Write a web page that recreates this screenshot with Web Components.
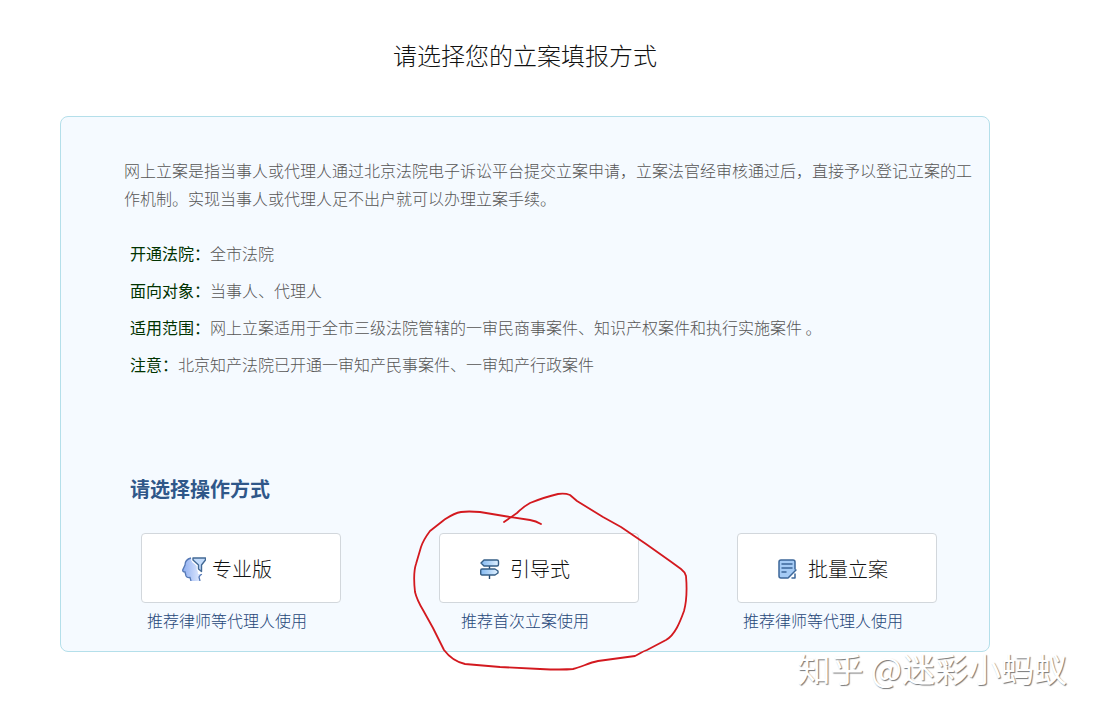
<!DOCTYPE html>
<html lang="zh-CN">
<head>
<meta charset="utf-8" />
<meta name="viewport" content="width=device-width, initial-scale=1" />
<title>请选择您的立案填报方式</title>
<style>
body {
	background: #fff;
	color: #555;
	font: 300 16px/28px "Noto Sans CJK SC", sans-serif;
	margin: 0;
}
</style>
</head>

<body>
<template id="filing-page">
<style>
:host {
	display: block;
	padding: 35px 105px 64px 60px;
	position: relative;
}

h1 {
	color: #111;
	font-size: 24px;
	font-weight: 300;
	line-height: 40px;
	margin: 0 0 41px;
	text-align: center;
}
</style>
<h1><slot name="title"></slot></h1>
<slot></slot>
</template>

<template id="filing-panel">
<style>
:host {
	background: #f5faff;
	border: 1px solid #b4dfea;
	border-radius: 8px;
	display: block;
	padding: 39px 16px 17px 63px;
}

p {
	margin: 0 0 23px;
}

dl {
	margin: 0 0 92px;
	padding-left: 6px;
}

h2 {
	color: #2f5789;
	font-size: 20px;
	font-weight: 700;
	line-height: 28px;
	margin: 0 0 30px;
	padding-left: 6px;
}

.options {
	display: flex;
	flex-wrap: wrap;
	gap: 20px;
	justify-content: space-between;
	padding: 0 36px 0 17px;
}
</style>
<p><slot name="intro"></slot></p>
<dl><slot name="facts"></slot></dl>
<h2><slot name="heading"></slot></h2>
<div class="options"><slot></slot></div>
</template>

<template id="filing-fact">
<style>
:host {
	display: block;
	line-height: 37px;
}

div {
	display: flex;
}

dt {
	color: #003300;
	flex: none;
	font-weight: 400;
}

dd {
	margin: 0;
}
</style>
<div>
	<dt></dt>
	<dd><slot></slot></dd>
</div>
</template>

<template id="filing-option">
<style>
:host {
	display: block;
	position: relative;
	width: 200px;
}

button {
	align-items: center;
	background: #fff;
	border: 1px solid #d2d7dc;
	border-radius: 4px;
	box-sizing: border-box;
	color: #111;
	cursor: pointer;
	display: flex;
	font: inherit;
	font-size: 20px;
	gap: 6px;
	height: 70px;
	padding: 2px 0 0 40px;
	width: 100%;
}

svg {
	flex: none;
	height: 24px;
	width: 24px;
}

small {
	color: #1f4678;
	display: block;
	font-family: KaiTi, "Noto Sans CJK SC", sans-serif;
	font-size: 16px;
	margin-top: 3px;
	padding-right: 28px;
	text-align: center;
}
</style>
<button type="button" aria-describedby="hint">
	<svg viewBox="0 0 24 24" aria-hidden="true"></svg>
	<span><slot></slot></span>
</button>
<small id="hint"><slot name="hint"></slot></small>
<slot name="mark"></slot>
</template>

<template id="hand-circle">
<style>
:host {
	left: -39px;
	pointer-events: none;
	position: absolute;
	top: -53px;
	z-index: 1;
}

svg {
	display: block;
	height: 200px;
	width: 300px;
}
</style>
<svg viewBox="0 0 300 200" fill="none" stroke="#d3191f" stroke-width="1.8" stroke-linecap="round" stroke-linejoin="round" aria-hidden="true">
	<path d="M141 44Q136 41 130 40L107 36.500L80 32Q68 31 61 32C54 33 50 36 44 40L30 51C27 55 23 61 21 67L16 84C13 93 14 103 15 112C17 120 20 125 23 130L33 148L44 170C50 178 56 182 65 184L100 187L140 189Q162 190 173 189C182 187 188 183 198 181L235 176C240 174 241 172 247 170L266 160C275 155 280 142 284 131C287 120 287 108 286 96Q285 92 281 89L270 81L246 64L221 47L203 37L177 21L170 15Q165 13 158 14Q145 17 130 23Q123 27 117 33L104 42" />
</svg>
</template>

<template id="water-mark">
<style>
:host {
	bottom: 24px;
	color: #fff;
	font-size: 33px;
	font-weight: 400;
	line-height: 48px;
	pointer-events: none;
	position: absolute;
	right: 28px;
	text-shadow: 1px 1px 1px #777;
	white-space: nowrap;
}
</style>
<slot></slot>
</template>

<filing-page>
	<span slot="title">请选择您的立案填报方式</span>
	<filing-panel>
		<span slot="intro">网上立案是指当事人或代理人通过北京法院电子诉讼平台提交立案申请，立案法官经审核通过后，直接予以登记立案的工作机制。实现当事人或代理人足不出户就可以办理立案手续。</span>
		<filing-fact slot="facts" label="开通法院：">全市法院</filing-fact>
		<filing-fact slot="facts" label="面向对象：">当事人、代理人</filing-fact>
		<filing-fact slot="facts" label="适用范围：">网上立案适用于全市三级法院管辖的一审民商事案件、知识产权案件和执行实施案件 。</filing-fact>
		<filing-fact slot="facts" label="注意：">北京知产法院已开通一审知产民事案件、一审知产行政案件</filing-fact>
		<span slot="heading">请选择操作方式</span>
		<filing-option icon="expert">专业版<span slot="hint">推荐律师等代理人使用</span></filing-option>
		<filing-option icon="guide">引导式<span slot="hint">推荐首次立案使用</span><hand-circle slot="mark"></hand-circle></filing-option>
		<filing-option icon="batch">批量立案<span slot="hint">推荐律师等代理人使用</span></filing-option>
	</filing-panel>
	<water-mark>知乎 @迷彩小蚂蚁</water-mark>
</filing-page>

<script>
const icons = {
	expert: `
		<defs><linearGradient id="head"><stop stop-color="#8eaef0" /><stop offset="1" stop-color="#e2ebff" /></linearGradient></defs>
		<path d="M10 1C6 1 3 4 3 8L.7 13Q.5 15 3 15L4 19Q5 21 8 20.500L9 24H18L17 20L19 17H16L15 9L10 5Z" fill="url(#head)" />
		<path d="M9 1C5 2 3 5 3 8L.7 13Q.5 15 3 15L4 19Q5 21 8 20.500L9 24M18 24L17 20Q18 18 20 17" fill="none" stroke="#5478b5" stroke-width="1.300" />
		<path d="M11 1H23.500V3L19.500 8V14.500L16.500 12V8L11 3Z" fill="#c4dcfb" stroke="#fff" stroke-width="3.500" />
		<path d="M11 1H23.500V3L19.500 8V14.500L16.500 12V8L11 3Z" fill="#c4dcfb" stroke="#436995" stroke-width="1.400" stroke-linejoin="round" />`,
	guide: `
		<defs><linearGradient id="sign"><stop stop-color="#83b9f1" /><stop offset="1" stop-color="#e1f1ff" /></linearGradient></defs>
		<path d="M9.500 9V12M9.500 18V22" stroke="#294c70" stroke-width="1.400" />
		<path d="M4 3H17Q18.500 3 18.500 4.500V7.500Q18.500 9 17 9H4L1 6Z" fill="url(#sign)" stroke="#365f87" stroke-width="1.400" stroke-linejoin="round" />
		<path d="M2 12H15L18 14V16L15 18H2Q.7 18 .7 16.500V13.500Q.7 12 2 12Z" fill="url(#sign)" stroke="#365f87" stroke-width="1.400" stroke-linejoin="round" />`,
	batch: `
		<path d="M3 3H15Q17 3 17 5V14L11 21H3Q1 21 1 19V5Q1 3 3 3Z" fill="#a5cbf5" />
		<path d="M17 12V5Q17 3 15 3H3Q1 3 1 5V19Q1 21 3 21H9M4 7H14M4 11H14M4 15H8M10 21L18 13M14 21H17V17" fill="none" stroke="#3d6799" stroke-width="1.500" stroke-linecap="round" stroke-linejoin="round" />`
};

class TemplateElement extends HTMLElement {
	constructor() {
		super();

		const template = document.querySelector('template#' + this.localName);

		this.attachShadow({ mode: 'open' }).appendChild(template.content.cloneNode(true));
	}
}

window.customElements.define('filing-page', class extends TemplateElement {});
window.customElements.define('filing-panel', class extends TemplateElement {});
window.customElements.define('hand-circle', class extends TemplateElement {});
window.customElements.define('water-mark', class extends TemplateElement {});

window.customElements.define('filing-fact', class extends TemplateElement {
	static get observedAttributes() {
		return ['label'];
	}

	attributeChangedCallback(name, oldValue, newValue) {
		this.shadowRoot.querySelector('dt').textContent = newValue;
	}
});

window.customElements.define('filing-option', class extends TemplateElement {
	static get observedAttributes() {
		return ['icon'];
	}

	attributeChangedCallback(name, oldValue, newValue) {
		this.shadowRoot.querySelector('svg').innerHTML = icons[newValue] || '';
	}
});
</script>
</body>
</html>
